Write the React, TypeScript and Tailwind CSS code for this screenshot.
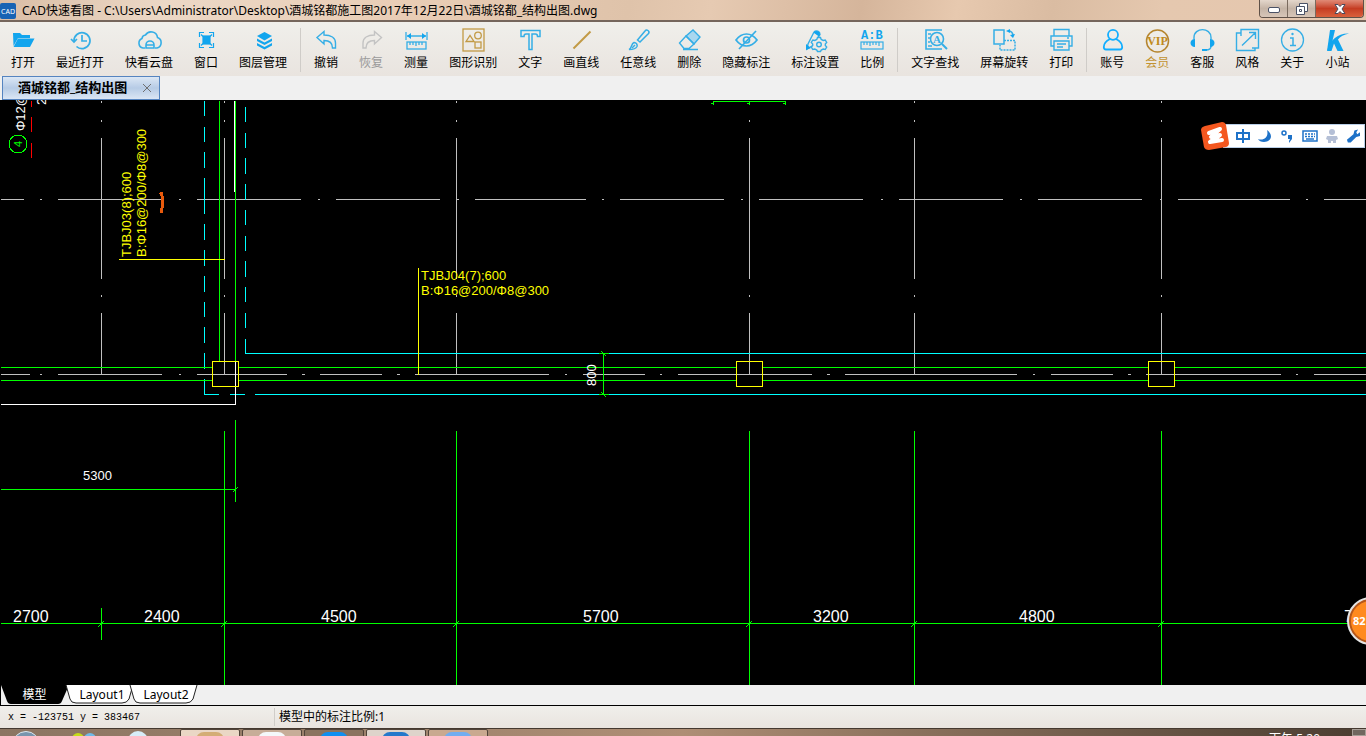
import type { ReactNode } from 'react'

const BLUE = '#12a5ee'
const SKY = '#35aee6'
const GOLD = '#c29a45'

const ICONS: Record<string, ReactNode> = {
  open: <path d="M2 5h7l2 2h8v3H7L2.500 18z M7 10.500h16.500L19 19H2.500z" fill={BLUE} />,
  recent: (
    <g fill="none" stroke={SKY} strokeWidth="1.700">
      <path d="M6 13a8 8 0 1 1 2.500 5.500" />
      <path d="M3 11l3 3 3-3M14 7v6h5" />
    </g>
  ),
  cloud: (
    <g fill="none" stroke={SKY} strokeWidth="1.600">
      <path d="M8 20H6a5 5 0 0 1-1-9.500A4 4 0 0 1 8.500 7a6.500 6.500 0 0 1 12 2.500A5.500 5.500 0 0 1 20 20h-2" />
      <path d="M9 20v-3a4 4 0 0 1 8 0v3zM9 17h8" />
    </g>
  ),
  window: (
    <g fill="none" stroke={BLUE} strokeWidth="1.200">
      <path d="M5.500 9V4.500H10M15 4.500h4.500V9M19.500 15v4.500H15M10 19.500H5.500V15" />
      <rect x="9" y="8" width="7" height="8" fill={BLUE} />
      <path d="M7 6.500l2 2M18 6.500l-2 2M18 17.500l-2-2M7 17.500l2-2" />
    </g>
  ),
  layers: (
    <g fill={BLUE}>
      <path d="M13.500 4L21 8l-7.500 4.500L6 8z" />
      <path d="M6 10.500l7.500 4 7.500-4v2.500l-7.500 4-7.500-4z" />
      <path d="M6 15l7.500 4 7.500-4v2.500l-7.500 4-7.500-4z" />
    </g>
  ),
  undo: <path d="M3 9.500L10 3.500v3.500c7 0 11.500 3 11.500 8v5h-3c0-5-3-7.500-8.500-7.500v3.500z" fill="none" stroke={SKY} strokeWidth="1.400" />,
  redo: <path d="M22.500 9.500L15.500 3.500v3.500c-7 0-11.500 3-11.500 8v5h3c0-5 3-7.500 8.500-7.500v3.500z" fill="none" stroke="#c3c3c3" strokeWidth="1.400" />,
  measure: (
    <g fill="none" stroke={SKY} strokeWidth="1.300">
      <path d="M2 4v8M23 4v8M3 8h19" />
      <path d="M3 8l4-3v6zM22 8l-4-3v6z" fill={BLUE} stroke="none" />
      <rect x="3" y="14" width="19" height="7" />
      <path d="M6 14v3M9 14v3M12 14v4M15 14v3M18 14v3" />
    </g>
  ),
  shapes: (
    <g fill="none" stroke={GOLD} strokeWidth="1.300">
      <rect x="2" y="1" width="21" height="22" />
      <path d="M5 13.500l4-6 4 6z" />
      <circle cx="17" cy="7.500" r="3.300" />
      <rect x="14" y="14" width="6" height="6" />
    </g>
  ),
  text: <path d="M3 2.500h19v6h-2.500c0-2-.5-2.500-2-2.500H14v15.500h-3V6H8c-1.500 0-2 .5-2 2.500H3z" fill="none" stroke={SKY} strokeWidth="1.500" />,
  line: <path d="M4.500 20.500L21.500 3.500" stroke={GOLD} strokeWidth="2" />,
  brush: (
    <g fill="none" stroke={SKY} strokeWidth="1.500">
      <path d="M11.500 12L19 3a2 2 0 0 1 3.500 2.500L14 14z" />
      <path d="M3 21.500c3-1 2-6 5-7a3 3 0 0 1 3 4c-1 2-4 3-8 3z" />
      <path d="M6 20l3-3" />
    </g>
  ),
  eraser: (
    <g fill="none" stroke={SKY} strokeWidth="1.400">
      <path d="M9 8l7-6 7 7-6 7z" fill="#a9d7ef" />
      <path d="M9 8l8 8-5 4.500H7L2.500 15zM6 21.500h15" />
    </g>
  ),
  hide: (
    <g fill="none" stroke={SKY} strokeWidth="1.700">
      <path d="M2 12c6-8 15-8 21 0-6 8-15 8-21 0z" />
      <circle cx="12.500" cy="12" r="3" />
      <path d="M5 21L22 3" />
    </g>
  ),
  settings: (
    <g fill="none" stroke={SKY} strokeWidth="1.400">
      <path d="M11 4a3.500 3.500 0 0 1 6 2.500l-2 3M11 4L5 16l-1 5 5-3" />
      <path d="M11 4a3.500 3.500 0 0 1 6 2.500L16 8.500l-5-3.500zM3 22v-6l5 4z" fill={BLUE} stroke="none" />
      <path d="M14.500 9.500h3l.7 2 2 .9 2-.4 1.500 2.500-1.400 1.500v1.500l1.400 1.500-1.500 2.500-2-.4-2 .9-.7 1.500h-3l-.7-1.500-2-.9-2 .4L8.300 19l1.400-1.500V16l-1.400-1.500L9.800 12l2 .4 2-.9z" />
      <circle cx="16" cy="16.500" r="2.300" />
    </g>
  ),
  scale: (
    <g fill="none" stroke={SKY} strokeWidth="1.200">
      <text x="1" y="11" fill={BLUE} stroke="none" fontSize="12" fontWeight="700" fontFamily="Liberation Mono, monospace">A:B</text>
      <rect x="1" y="14" width="22" height="7" />
      <path d="M4 14v3M7 14v3M10 14v4M13 14v3M16 14v3M19 14v4" />
    </g>
  ),
  find: (
    <g fill="none" stroke={SKY} strokeWidth="1.600">
      <path d="M19 2H3v19h16M5 6h3M5 10h2M5 14h2M5 18h4" />
      <circle cx="14" cy="11" r="6.500" />
      <path d="M19 16l5 5" strokeWidth="2" />
      <text x="10" y="15" fill={SKY} stroke="none" fontSize="11" fontWeight="700" fontFamily="Liberation Serif, serif">A</text>
    </g>
  ),
  rotate: (
    <g fill="none" stroke={SKY} strokeWidth="1.500">
      <rect x="2" y="2" width="10" height="14" />
      <path d="M12 12.500h11v9.500H8v-5" strokeDasharray="2 1" />
      <path d="M16 3c3 0 5 2 5 5" />
      <path d="M14 3l4-2v4zM21 10l-3-3 5-1z" fill={BLUE} stroke="none" />
    </g>
  ),
  print: (
    <g fill="none" stroke={SKY} strokeWidth="1.400">
      <path d="M5 7.500V1.500h15v6M5 18H2V8h21v10h-3M5 13h15v9H5zM8 16h9M8 19h6M18 10h2" />
    </g>
  ),
  account: (
    <g fill="none" stroke="#12aeff" strokeWidth="1.800">
      <circle cx="13" cy="6.800" r="5" />
      <path d="M10 11c-4 2-6.200 4-6.200 8 0 2 .7 2.500 2.200 2.500h14c1.500 0 2.200-.5 2.200-2.500 0-4-2.200-6-6.200-8" />
    </g>
  ),
  vip: (
    <g>
      <circle cx="12.500" cy="13" r="11" fill="none" stroke="#b5852e" strokeWidth="1.500" />
      <text x="12.500" y="17" textAnchor="middle" fill="#c08a1c" fontSize="12" fontWeight="700" fontFamily="Liberation Serif, serif">VIP</text>
    </g>
  ),
  service: (
    <g fill="none" stroke={SKY} strokeWidth="1.400">
      <path d="M4 11V9.500c0-10.500 17-10.500 17 0V11M21 18c0 2.500-2 4-5 4" />
      <path d="M5 11v8c-3 0-4.500-2-4.500-4S2 11 5 11zM20 11v8c3 0 4.500-2 4.500-4S23 11 20 11zM12 21h5v2h-5z" fill={BLUE} stroke="none" />
    </g>
  ),
  style: (
    <g fill="none" stroke={SKY} strokeWidth="1.400">
      <path d="M13 1.500H6V5M13 1.500h10.500V20H20M6 5H1.500v17.500H20V20M6 5v3M17 20h3M7 17.500L20 5M14 4.500h6.500v6.500" />
    </g>
  ),
  about: (
    <g fill="none" stroke={SKY} strokeWidth="1.300">
      <circle cx="12.500" cy="12" r="11" />
      <path d="M10 10h3v7.500M10 17.500h6" strokeWidth="1.500" />
      <circle cx="12.500" cy="6" r="1.200" fill={SKY} stroke="none" />
    </g>
  ),
  station: (
    <g fill={BLUE}>
      <path d="M5 2h5L6.500 17 2 23z" />
      <path d="M2 23C5 12 13 5 24 5.500c-5 1-9 3-11 6L18.500 23h-6L9 15.500 6.500 23z" />
    </g>
  ),
}

type Tool = [icon: string, label: string]

const GROUPS: Tool[][] = [
  [['open', '打开'], ['recent', '最近打开'], ['cloud', '快看云盘'], ['window', '窗口'], ['layers', '图层管理']],
  [
    ['undo', '撤销'], ['redo', '恢复'], ['measure', '测量'], ['shapes', '图形识别'], ['text', '文字'], ['line', '画直线'],
    ['brush', '任意线'], ['eraser', '删除'], ['hide', '隐藏标注'], ['settings', '标注设置'], ['scale', '比例'],
  ],
  [['find', '文字查找'], ['rotate', '屏幕旋转'], ['print', '打印']],
  [['account', '账号'], ['vip', '会员'], ['service', '客服'], ['style', '风格'], ['about', '关于'], ['station', '小站']],
]

function ToolButton({ icon, label }: { icon: string; label: string }) {
  const color = icon === 'redo' ? 'text-[#9a9a9a]' : icon === 'vip' ? 'text-[#c29331]' : 'text-black'
  return (
    <button disabled={icon === 'redo'} className={`flex shrink-0 flex-col items-center gap-[3px] ${color}`}>
      <svg width="24" height="24" viewBox="0 0 24 24" overflow="visible" aria-hidden="true">{ICONS[icon]}</svg>
      <span className="text-[12px] leading-4 whitespace-nowrap">{label}</span>
    </button>
  )
}

function TitleBar() {
  return (
    <header className="flex h-[22px] shrink-0 items-start border-b-2 border-b-[#75665c] bg-[linear-gradient(100deg,#d9bda5_0%,#ecd8c6_12%,#e9cdb5_30%,#dfc3aa_46%,#e6cab2_52%,#d5b59b_63%,#e7c9af_70%,#dabca2_77%,#e5c8af_85%,#e5c6ae_100%)]">
      <div className="mt-[3px] flex h-4 w-4 items-center justify-center rounded-xs bg-[#1763b4] text-[7px] leading-none text-white">CAD</div>
      <h1 className="ml-1.5 flex-1 truncate text-[12px] leading-[22px] text-black">
        CAD快速看图 - C:\Users\Administrator\Desktop\酒城铭都施工图2017年12月22日\酒城铭都_结构出图.dwg
      </h1>
      <div className="mr-0.5 flex h-[18px] overflow-hidden rounded-b border border-t-0 border-[#5f5148]">
        <button aria-label="最小化" className="flex w-7 items-end justify-center border-r border-[#7a6a5e] bg-linear-to-b from-[#e4d7cc] via-[#c5b4a6] to-[#d8c6b8] pb-1">
          <span className="h-1.5 w-3 rounded-xs border border-[#4b5266] bg-white" />
        </button>
        <button aria-label="还原" className="flex w-7 items-center justify-center border-r border-[#7a6a5e] bg-linear-to-b from-[#e4d7cc] via-[#c5b4a6] to-[#d8c6b8]">
          <svg width="12" height="12" viewBox="0 0 12 12" fill="#fff" stroke="#4b5266">
            <path d="M3.500.5h8v8h-8z" />
            <path d="M.5 3.500h8v8h-8zM3.500 6.500h2v2h-2z" />
          </svg>
        </button>
        <button aria-label="关闭" className="flex w-[47px] items-center justify-center bg-linear-to-b from-[#e08a76] via-[#c53c22] to-[#d9603c]">
          <svg width="12" height="10" viewBox="0 0 12 10">
            <path d="M1 .5h3l2 2 2-2h3L8 5l3 4.500H8l-2-2-2 2H1L4 5z" fill="#fff" stroke="#4b4a5c" />
          </svg>
        </button>
      </div>
    </header>
  )
}

function Toolbar() {
  return (
    <nav className="flex h-[54px] shrink-0 items-start gap-[21px] overflow-hidden bg-linear-to-b from-[#f0efeb] to-[#e9e4df] pt-1.5 pl-[11px]">
      {GROUPS.map((group, i) => (
        <div key={i} className="flex gap-[21px]">
          {i > 0 && <div className="-mx-2 h-11 w-px bg-[#cfccc8]" />}
          {group.map(([icon, label]) => <ToolButton key={icon} icon={icon} label={label} />)}
        </div>
      ))}
    </nav>
  )
}

const GRAY = '#c0c0c0'
const GREEN = '#00ff00'
const CYAN = '#00ffff'
const YELLOW = '#ffff00'

// one-pixel strokes, ends are [from, to) pairs
const H = ({ y, c, s }: { y: number; c: string; s: number[][] }) => s.map(([a, b]) => <rect key={a} x={a} y={y} width={b - a} height="1" fill={c} />)
const V = ({ x, c, s }: { x: number; c: string; s: number[][] }) => s.map(([a, b]) => <rect key={a} x={x} y={a} width="1" height={b - a} fill={c} />)

const END = 4000
const AXES = [101, 224, 456, 749, 914, 1161]
const AXIS_DASHES = [[101, 103], [120, 122], [138, 279], [295, 297], [313, 375]]
const COLUMNS = [212, 736, 1148]
const DIMS = [
  { x: 13, t: '2700' }, { x: 144, t: '2400' }, { x: 321, t: '4500' }, { x: 583, t: '5700' },
  { x: 813, t: '3200' }, { x: 1019, t: '4800' }, { x: 1344, t: '7' },
]

function Drawing() {
  return (
    <svg className="block h-full w-full bg-black" shapeRendering="crispEdges" fontFamily="Liberation Sans, sans-serif">
      <g transform="translate(0 -100)">
        {AXES.map(x => <V key={x} x={x} c={GRAY} s={AXIS_DASHES} />)}
        <H y={199} c={GRAY} s={[[1, 24], [40, 42], [58, 162], [179, 181], [197, 301], [318, 320], [336, 440], [457, 459], [475, 586], [602, 604], [620, 724], [741, 743], [759, 863], [881, 883], [899, 1003], [1020, 1022], [1038, 1142], [1160, 1162], [1178, 1290], [1306, 1308], [1324, END]]} />
        <H y={374} c={GRAY} s={[[1, 30], [40, 42], [58, 162], [179, 181], [197, 287], [302, 305], [320, 382], [397, 400], [415, 549], [565, 567], [583, 645], [660, 662], [678, 812], [827, 830], [845, 1017], [1033, 1035], [1051, 1113], [1128, 1131], [1146, 1281], [1296, 1298], [1314, END]]} />

        <V x={31} c="#ff0000" s={[[101, 107], [117, 132], [143, 158]]} />
        <V x={204} c={CYAN} s={[[101, 116], [127, 142], [152, 168], [178, 214], [224, 240], [250, 266], [276, 292], [302, 317], [327, 343], [353, 369], [379, 394]]} />
        <V x={245} c={CYAN} s={[[107, 122], [133, 148], [158, 174], [184, 200], [210, 225], [236, 251], [261, 277], [287, 302], [313, 328], [339, 354]]} />
        <H y={353} c={CYAN} s={[[245, END]]} />
        <H y={394} c={CYAN} s={[[204, 219], [230, 245], [255, END]]} />

        <V x={219} c={GREEN} s={[[101, 361]]} />
        <V x={235} c={GREEN} s={[[101, 361]]} />
        <V x={234} c="#ffffff" s={[[101, 192]]} />
        <H y={367} c={GREEN} s={[[1, 212], [238, 736], [763, 1148], [1175, END]]} />
        <H y={380} c={GREEN} s={[[1, 212], [238, 736], [763, 1148], [1175, END]]} />
        <V x={235} c="#ffffff" s={[[361, 405]]} />
        <H y={404} c="#ffffff" s={[[1, 236]]} />

        {COLUMNS.map(x => (
          <g key={x}>
            <H y={361} c={YELLOW} s={[[x, x + 26]]} />
            <H y={386} c={YELLOW} s={[[x, x + 26]]} />
            <V x={x} c={YELLOW} s={[[361, 387]]} />
            <V x={x + 26} c={YELLOW} s={[[361, 387]]} />
          </g>
        ))}

        {/* rebar callouts */}
        <V x={418} c={YELLOW} s={[[268, 375]]} />
        <H y={259} c={YELLOW} s={[[119, 225]]} />
        <g fill={YELLOW} fontSize="13">
          <text x="421" y="280">TJBJ04(7);600</text>
          <text x="421" y="295">B:Φ16@200/Φ8@300</text>
          <text transform="translate(131 257) rotate(-90)">TJBJ03(8);600</text>
          <text transform="translate(146 257) rotate(-90)">B:Φ16@200/Φ8@300</text>
        </g>
        <path d="M160 192h3v4h1v12h-1v5h-3v-5h1v-12h-1v-2h-1z" fill="#e85a0c" />

        <g fontSize="13" fill="#ffffff">
          <text transform="translate(25 131) rotate(-90)">Φ12@</text>
          <text transform="translate(46 105) rotate(-90)">2</text>
          <text transform="translate(596 386) rotate(-90)">800</text>
          <text x="83" y="480">5300</text>
        </g>
        <circle cx="18" cy="144" r="9" fill="none" stroke={GREEN} />
        <text transform="translate(22 147) rotate(-90)" fontSize="11" fill={GREEN}>4</text>

        {/* dimensions */}
        <H y={101} c={GREEN} s={[[713, 786]]} />
        {[713, 749, 785].map(x => <path key={x} d={`M${x} 101h1v4h-1zM${x - 2} 103h2v1h-2z`} fill={GREEN} />)}
        <V x={603} c={GREEN} s={[[353, 395]]} />
        {[353, 394].map(y => <path key={y} d={`M599 ${y}h10M601 ${y - 2}l5 5`} stroke={GREEN} />)}
        <H y={489} c={GREEN} s={[[1, 236]]} />
        <V x={235} c={GREEN} s={[[420, 502]]} />
        <path d="M233 492l5-5" stroke={GREEN} />
        <H y={623} c={GREEN} s={[[1, END]]} />
        <V x={101} c={GREEN} s={[[608, 640]]} />
        {AXES.slice(1).map(x => <V key={x} x={x} c={GREEN} s={[[431, END]]} />)}
        {AXES.map(x => <path key={x} d={`M${x - 3} 627l6-6`} stroke={GREEN} />)}
        <g fontSize="16" fill="#ffffff">
          {DIMS.map(d => <text key={d.x} x={d.x} y="622">{d.t}</text>)}
        </g>
      </g>
    </svg>
  )
}

function ImeBar() {
  return (
    <div className="absolute top-[22px] right-px flex items-center">
      <svg width="28" height="28" viewBox="0 0 28 28" className="z-10 -mr-1.5">
        <path d="M4 4l17-4q3 0 4 3l3 18q0 3-3 4L8 28q-4 0-5-3L0 8q0-3 4-4z" fill="#f4571f" />
        <path d="M8 11l11-4-9 8 9-2-10 7 12-2" fill="none" stroke="#fff" strokeWidth="4" strokeLinecap="round" strokeLinejoin="round" />
      </svg>
      <div className="flex h-6 items-center gap-2 border border-[#b9cfe8] bg-white pr-1 pl-3 text-[#1e72c8]">
        <svg width="14" height="14" viewBox="0 0 14 14" fill="none" stroke="currentColor" strokeWidth="2"><path d="M1 4h12v6H1zM7 0v14" /></svg>
        <svg width="14" height="14" viewBox="0 0 14 14" fill="currentColor"><path d="M9 1c7 5 4 12-3 12-3 0-5-1-6-3 6 2 11-2 9-9z" /></svg>
        <svg width="14" height="14" viewBox="0 0 14 14" fill="none" stroke="currentColor" strokeWidth="1.500"><circle cx="4" cy="4" r="2" /><path d="M8 6h4v4l-3 4v-2l1-2H8z" fill="currentColor" stroke="none" /></svg>
        <svg width="16" height="14" viewBox="0 0 16 14" fill="none" stroke="currentColor" strokeWidth="1.500"><rect x="1" y="2" width="14" height="10" /><path d="M3 5h10M3 7.500h10" strokeDasharray="2 1" /><path d="M4 10h8" /></svg>
        <svg width="12" height="14" viewBox="0 0 12 14" fill="#b4bfd6"><circle cx="6" cy="3" r="3" /><path d="M1 7h10l1 3-2 1v3H7v-2H5v2H2v-3l-2-1z" /></svg>
        <svg width="14" height="14" viewBox="0 0 15 14" fill="currentColor"><path d="M13 0L9 1 8 5l-7 6 1 3h3l6-6 4-1V3l-3 2-1-2z" /></svg>
      </div>
    </div>
  )
}

function LayoutTabs() {
  return (
    <div role="tablist" className="flex h-[21px] shrink-0 items-start border-b border-l border-black bg-[#f0f0f0] text-[12px]">
      <button role="tab" aria-selected="true" className="relative h-[19px] w-[67px] text-white">
        <svg className="absolute inset-0" width="67" height="19"><path d="M0 0h68l-7 16q-1 3-4 3H10q-3 0-4-3z" fill="#000" /></svg>
        <span className="relative leading-5">模型</span>
      </button>
      {['Layout1', 'Layout2'].map(name => (
        <button key={name} role="tab" aria-selected="false" className="relative h-[19px] w-16 pl-1">
          <svg className="absolute inset-0" width="64" height="19" overflow="visible"><path d="M-2 0l4 14q1 4 6 4h46q5 0 7-4l4-14" fill="#fff" stroke="#222" /></svg>
          <span className="relative leading-5">{name}</span>
        </button>
      ))}
    </div>
  )
}

const TASKS = [
  { bg: 'bg-[#ead7c5]', dot: 'bg-[#d4ad75]' },
  { bg: 'bg-[#c7ad98]', dot: 'bg-[#f4f8fa]' },
  { bg: 'bg-[#8a735f]', dot: 'bg-[#108ff0]' },
  { bg: 'bg-[#ded4cb]', dot: 'bg-[#2579cb]' },
  { bg: 'bg-[#c9a990]', dot: 'bg-[#72adf0]' },
]

function Taskbar() {
  return (
    <footer className="flex h-2 shrink-0 overflow-hidden border-t border-[#453930] bg-linear-to-r from-[#8b7562] via-[#ae8e75] to-[#4b3d31]">
      <div className="flex w-[180px] shrink-0 gap-8 pt-0.5 pl-3">
        <span className="h-7 w-7 rounded-full border border-[#dce8ef] bg-[#7895ad]" />
        <span className="flex pt-0.5"><i className="h-4 w-3 rounded-full bg-[#c6dc18]" /><i className="h-4 w-3 rounded-full bg-[#6fbbe8]" /></span>
        <span className="h-5 w-5 rounded-full bg-[#d7edf8]" />
      </div>
      <div className="flex gap-0.5">
        {TASKS.map((t, i) => (
          <button key={i} aria-label={`任务 ${i + 1}`} className={`flex h-5 w-[60px] justify-center rounded-xs border border-[#51443a] pt-0.5 ${t.bg}`}>
            <span className={`h-6 w-7 rounded-lg ${t.dot}`} />
          </button>
        ))}
      </div>
      <span className="mt-0.5 mr-8 ml-auto text-[12px] leading-4 text-white">下午 5:20</span>
      <span className="w-3.5 border border-[#a89f97] bg-[#71675f]" />
    </footer>
  )
}

export default function App() {
  return (
    <div className="flex h-screen flex-col overflow-hidden bg-[#f0f0f0] font-['Noto_Sans','Noto_Sans_CJK_SC',sans-serif] text-black">
      <TitleBar />
      <Toolbar />
      <div className="flex h-6 shrink-0 pl-0.5">
        <div className="flex w-[158px] items-center border border-[#5584c0] bg-linear-to-b from-[#dce7f5] via-[#b6cbe5] to-[#dbe6f4] pl-[15px]">
          <span className="text-[13px] font-bold whitespace-nowrap">酒城铭都_结构出图</span>
          <button aria-label="关闭标签" className="ml-auto pr-2">
            <svg width="8" height="8" viewBox="0 0 8 8" stroke="#707070"><path d="M0 0l8 8M8 0L0 8" /></svg>
          </button>
        </div>
      </div>
      <main className="relative min-h-0 flex-1 overflow-hidden">
        <Drawing />
        <ImeBar />
        <div className="absolute top-[497px] -right-[29px] flex h-12 w-12 items-center rounded-full border-2 border-[#e4e4e4] bg-white">
          <span className="flex h-full w-full items-center rounded-full border-2 border-[#b5571b] bg-[#ff8a1f] pl-0.5 text-[11px] font-bold text-white">82</span>
        </div>
      </main>
      <LayoutTabs />
      <div className="flex h-[22px] shrink-0 items-center bg-linear-to-b from-[#f0efeb] to-[#e9e4df] text-[12px]">
        <span className="w-[274px] pl-2 font-['Liberation_Mono',monospace] text-[10px] whitespace-pre">x = -123751 y = 383467</span>
        <span className="border-l border-[#d0cdc9] pl-1">模型中的标注比例:1</span>
      </div>
      <Taskbar />
    </div>
  )
}
